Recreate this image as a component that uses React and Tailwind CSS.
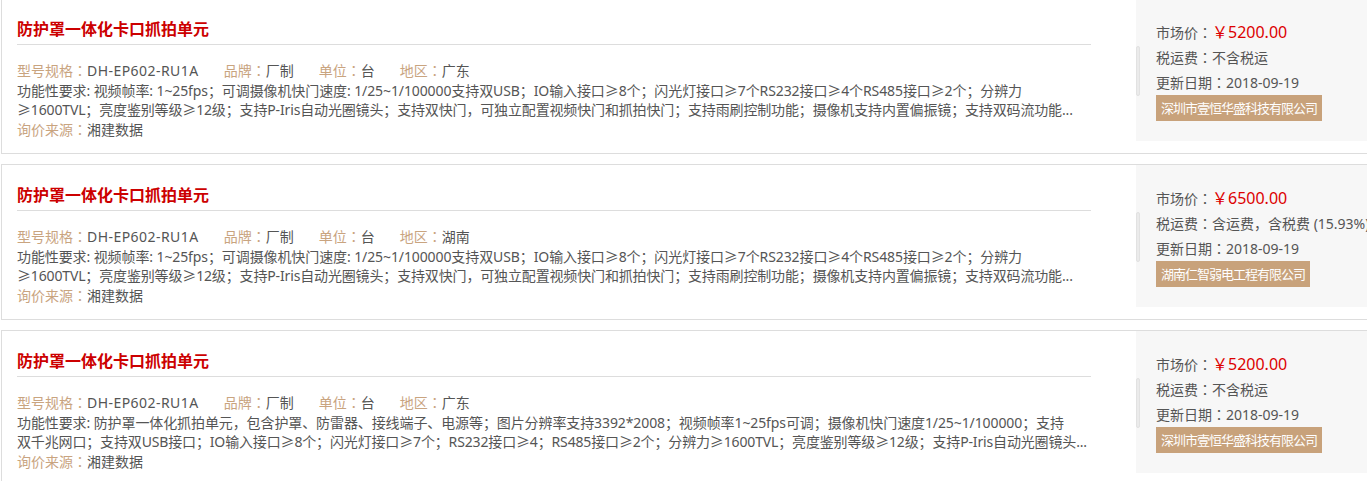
import React from "react";

const items = [
  {
    region: "广东",
    d1: "功能性要求: 视频帧率: 1~25fps；可调摄像机快门速度: 1/25~1/100000支持双USB；IO输入接口≥8个；闪光灯接口≥7个RS232接口≥4个RS485接口≥2个；分辨力",
    d2: "≥1600TVL；亮度鉴别等级≥12级；支持P-Iris自动光圈镜头；支持双快门，可独立配置视频快门和抓拍快门；支持雨刷控制功能；摄像机支持内置偏振镜；支持双码流功能...",
    price: "￥5200.00",
    tax: "不含税运",
    company: "深圳市壹恒华盛科技有限公司",
  },
  {
    region: "湖南",
    d1: "功能性要求: 视频帧率: 1~25fps；可调摄像机快门速度: 1/25~1/100000支持双USB；IO输入接口≥8个；闪光灯接口≥7个RS232接口≥4个RS485接口≥2个；分辨力",
    d2: "≥1600TVL；亮度鉴别等级≥12级；支持P-Iris自动光圈镜头；支持双快门，可独立配置视频快门和抓拍快门；支持雨刷控制功能；摄像机支持内置偏振镜；支持双码流功能...",
    price: "￥6500.00",
    tax: "含运费，含税费 (15.93%)",
    company: "湖南仁智弱电工程有限公司",
  },
  {
    region: "广东",
    d1: "功能性要求: 防护罩一体化抓拍单元，包含护罩、防雷器、接线端子、电源等；图片分辨率支持3392*2008；视频帧率1~25fps可调；摄像机快门速度1/25~1/100000；支持",
    d2: "双千兆网口；支持双USB接口；IO输入接口≥8个；闪光灯接口≥7个；RS232接口≥4；RS485接口≥2个；分辨力≥1600TVL；亮度鉴别等级≥12级；支持P-Iris自动光圈镜头...",
    price: "￥5200.00",
    tax: "不含税运",
    company: "深圳市壹恒华盛科技有限公司",
  },
];

function Colon() {
  return <span className="font-['Noto_Sans_CJK_JP',sans-serif]">：</span>;
}

function Meta({ label, value, wide }) {
  return (
    <span className="mr-[25px] whitespace-nowrap">
      <span className="text-[#c9a47f]">
        {label}
        <Colon />
      </span>
      <span className={wide ? "tracking-[0.45px] text-[#555]" : "text-[#555]"}>{value}</span>
    </span>
  );
}

function Card({ it }) {
  return (
    <div className="flex h-[156px] w-[1400px] shrink-0 border border-[#ddd] bg-white">
      <div className="w-[1134px] shrink-0 pl-[15px] pr-[45px] pt-[15px]">
        <div className="h-[31px] border-b border-[#ddd] text-[16px] font-bold leading-[30px] text-[#cc0000]">
          防护罩一体化卡口抓拍单元
        </div>
        <div className="mt-[15px] flex text-[14px] leading-[20px]">
          <Meta label="型号规格" value="DH-EP602-RU1A" wide />
          <Meta label="品牌" value="厂制" />
          <Meta label="单位" value="台" />
          <Meta label="地区" value={it.region} />
        </div>
        <div className="overflow-hidden whitespace-nowrap text-[14px] leading-[19px] tracking-[-0.1px] text-[#555]">
          {it.d1}
        </div>
        <div className="overflow-hidden whitespace-nowrap text-[14px] leading-[19px] tracking-[-0.15px] text-[#555]">
          {it.d2}
        </div>
        <div className="text-[14px] leading-[21px]">
          <span className="text-[#c9a47f]">
            询价来源
            <Colon />
          </span>
          <span className="text-[#555]">湘建数据</span>
        </div>
      </div>
      <div className="flex h-[142px] flex-1 bg-[#f7f7f7]">
        <div className="mt-[47px] h-[50px] w-[4px] shrink-0 rounded-sm border border-[#e2e2e2] bg-[#ebebeb]" />
        <div className="flex flex-col items-start pl-[16px] pt-[21px] text-[14px] leading-[25px] text-[#555]">
          <div className="whitespace-nowrap">
            市场价
            <Colon />
            <span className="text-[16px] text-[#dd0000]">{it.price}</span>
          </div>
          <div className="whitespace-nowrap">
            税运费
            <Colon />
            {it.tax}
          </div>
          <div className="whitespace-nowrap">
            更新日期
            <Colon />
            2018-09-19
          </div>
          <div className="flex h-[26px] items-center bg-[#c8a27b] px-[5px]">
            <span className="whitespace-nowrap font-['Noto_Sans_CJK_SC',sans-serif] text-[13px] leading-[26px] tracking-[-1px] text-white">
              {it.company}
            </span>
          </div>
        </div>
      </div>
    </div>
  );
}

export default function App() {
  return (
    <div className="h-[481px] w-full overflow-hidden bg-white font-['Noto_Sans','Noto_Sans_CJK_SC',sans-serif]">
      <div className="ml-px mt-[-2px] flex flex-col gap-[10px]">
        {items.map((it, i) => (
          <Card key={i} it={it} />
        ))}
      </div>
    </div>
  );
}
